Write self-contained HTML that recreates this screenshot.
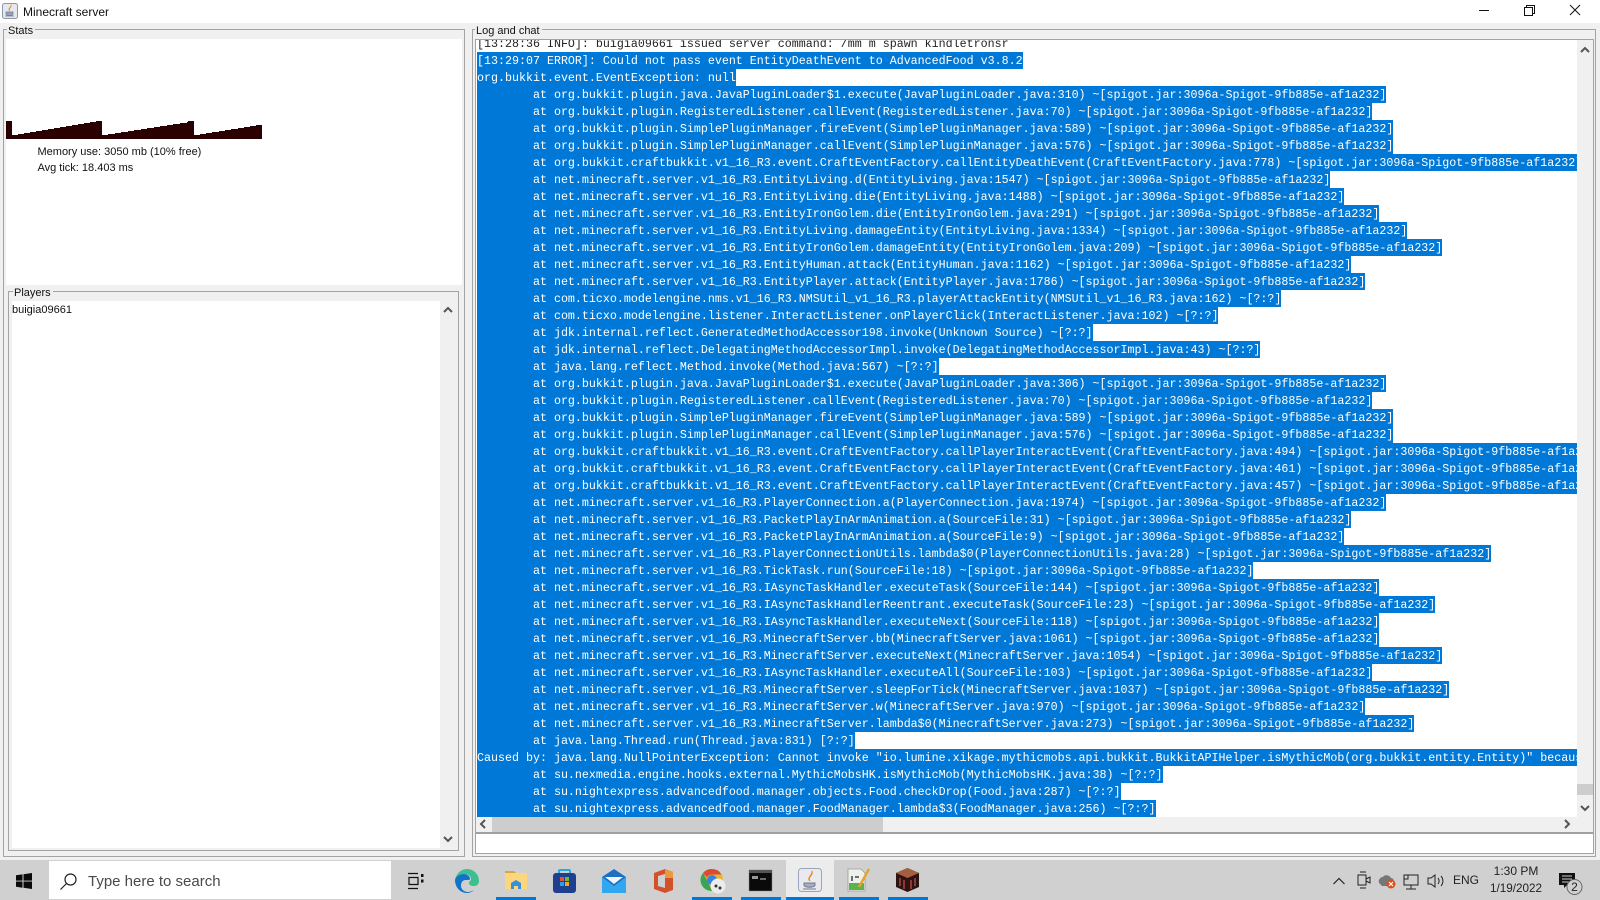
<!DOCTYPE html>
<html><head><meta charset="utf-8"><title>Minecraft server</title>
<style>
html,body{margin:0;padding:0;width:1600px;height:900px;overflow:hidden;background:#f0f0f0;font-family:"Liberation Sans",sans-serif;color:#111}
.a{position:absolute;box-sizing:border-box}
.b{border:1px solid #a3a3a3}
.lg{position:absolute;background:#f0f0f0;font-size:11px;line-height:14px;padding:0 2px 0 1px;color:#111;white-space:nowrap}
#log{left:476px;top:40px;width:1101px;height:777px;overflow:hidden;background:#fff}
#lines{position:absolute;left:1px;top:-5px;font-family:"Liberation Mono",monospace;font-size:11.667px;line-height:19px;color:#fff;white-space:pre}
#lines div{height:17px}
#lines span{display:block;width:fit-content;height:17px;background:#0078d7}
#lines div.n{color:#222}
svg{position:absolute;overflow:visible}
.ul{position:absolute;top:897px;height:3px;background:#0078d7}
.tr{position:absolute;font-size:12px;line-height:14px;text-align:center;color:#222;white-space:nowrap}
</style></head><body>
<!-- title bar -->
<div class="a" style="left:0;top:0;width:1600px;height:23px;background:#fff"></div>
<svg style="left:2px;top:3px" width="16" height="16" viewBox="0 0 16 16"><rect x=".5" y=".5" width="15" height="15" rx="2" fill="#e6e8ee" stroke="#8f97ad"/><path d="M9 1.500c1.500 2.500-3 4-1.500 6.500-2.500-2.500 2.500-4 1.500-6.500z" fill="#e8861c" stroke="#e8861c" stroke-width=".6"/><path d="M4 9h7v2c0 2-7 2-7 0zM3 13h9" fill="#9aa3b5" stroke="#6e7a90" stroke-width=".7"/></svg>
<div class="a" style="left:23px;top:5px;font-size:12px;line-height:14px;color:#111">Minecraft server</div>
<svg style="left:1479px;top:5px" width="110" height="12" viewBox="0 0 110 12" fill="none" stroke="#111" stroke-width="1"><path d="M0 5.500h10"/><path d="M45.500 2.500h8v8h-8zM47.500 2.500v-2h8v8h-2"/><path d="M91 0l10 10M101 0l-10 10"/></svg>

<!-- Stats panel -->
<div class="a b" style="left:3px;top:29px;width:462px;height:828px"></div>
<div class="a" style="left:6px;top:39px;width:456px;height:246px;background:#fff"></div>
<div class="lg" style="left:7px;top:24px">Stats</div>
<svg style="left:0;top:0" width="270" height="145" viewBox="0 0 270 145" shape-rendering="crispEdges"><path fill="#2a0000" d="M6 139V121H12V135H18V134H24V133H30V132H36V131H42V130H48V129H54V128H60V127H66V126H72V125H78V124H84V123H90V122H96V121H102V135H108V134H115V133H121V132H128V131H134V130H141V129H147V128H154V127H160V126H167V125H173V124H180V123H187V122H188V121H194V135H200V134H206V133H212V132H219V131H225V130H231V129H238V128H244V127H250V126H256V125H262V139Z"/></svg>
<div class="a" style="left:37.500px;top:145px;font-size:11px;line-height:14px;white-space:nowrap;color:#111">Memory use: 3050 mb (10% free)</div>
<div class="a" style="left:37.500px;top:161px;font-size:11px;line-height:14px;white-space:nowrap;color:#111">Avg tick: 18.403 ms</div>

<!-- Players -->
<div class="a b" style="left:8px;top:291px;width:451px;height:560px"></div>
<div class="lg" style="left:13px;top:286px">Players</div>
<div class="a" style="left:12px;top:301px;width:428px;height:547px;background:#fff"></div>
<div class="a" style="left:12px;top:303px;font-size:11px;line-height:14px;color:#111">buigia09661</div>
<svg style="left:440px;top:301px" width="16" height="547" viewBox="0 0 16 547" fill="none" stroke="#555" stroke-width="2"><path d="M4 11l4-4 4 4M4 536l4 4 4-4"/></svg>

<!-- Log panel -->
<div class="a b" style="left:472px;top:29px;width:1124px;height:828px"></div>
<div class="lg" style="left:475px;top:24px">Log and chat</div>
<div class="a b" style="left:475px;top:39px;width:1119px;height:795px;border-bottom:2px solid #a0a0a0"></div>
<div class="a" id="log"><div id="lines"><div class="n">[13:28:36 INFO]: buigia09661 issued server command: /mm m spawn kindletronsr</div><div><span>[13:29:07 ERROR]: Could not pass event EntityDeathEvent to AdvancedFood v3.8.2</span></div><div><span>org.bukkit.event.EventException: null</span></div><div><span>        at org.bukkit.plugin.java.JavaPluginLoader$1.execute(JavaPluginLoader.java:310) ~[spigot.jar:3096a-Spigot-9fb885e-af1a232]</span></div><div><span>        at org.bukkit.plugin.RegisteredListener.callEvent(RegisteredListener.java:70) ~[spigot.jar:3096a-Spigot-9fb885e-af1a232]</span></div><div><span>        at org.bukkit.plugin.SimplePluginManager.fireEvent(SimplePluginManager.java:589) ~[spigot.jar:3096a-Spigot-9fb885e-af1a232]</span></div><div><span>        at org.bukkit.plugin.SimplePluginManager.callEvent(SimplePluginManager.java:576) ~[spigot.jar:3096a-Spigot-9fb885e-af1a232]</span></div><div><span>        at org.bukkit.craftbukkit.v1_16_R3.event.CraftEventFactory.callEntityDeathEvent(CraftEventFactory.java:778) ~[spigot.jar:3096a-Spigot-9fb885e-af1a232]</span></div><div><span>        at net.minecraft.server.v1_16_R3.EntityLiving.d(EntityLiving.java:1547) ~[spigot.jar:3096a-Spigot-9fb885e-af1a232]</span></div><div><span>        at net.minecraft.server.v1_16_R3.EntityLiving.die(EntityLiving.java:1488) ~[spigot.jar:3096a-Spigot-9fb885e-af1a232]</span></div><div><span>        at net.minecraft.server.v1_16_R3.EntityIronGolem.die(EntityIronGolem.java:291) ~[spigot.jar:3096a-Spigot-9fb885e-af1a232]</span></div><div><span>        at net.minecraft.server.v1_16_R3.EntityLiving.damageEntity(EntityLiving.java:1334) ~[spigot.jar:3096a-Spigot-9fb885e-af1a232]</span></div><div><span>        at net.minecraft.server.v1_16_R3.EntityIronGolem.damageEntity(EntityIronGolem.java:209) ~[spigot.jar:3096a-Spigot-9fb885e-af1a232]</span></div><div><span>        at net.minecraft.server.v1_16_R3.EntityHuman.attack(EntityHuman.java:1162) ~[spigot.jar:3096a-Spigot-9fb885e-af1a232]</span></div><div><span>        at net.minecraft.server.v1_16_R3.EntityPlayer.attack(EntityPlayer.java:1786) ~[spigot.jar:3096a-Spigot-9fb885e-af1a232]</span></div><div><span>        at com.ticxo.modelengine.nms.v1_16_R3.NMSUtil_v1_16_R3.playerAttackEntity(NMSUtil_v1_16_R3.java:162) ~[?:?]</span></div><div><span>        at com.ticxo.modelengine.listener.InteractListener.onPlayerClick(InteractListener.java:102) ~[?:?]</span></div><div><span>        at jdk.internal.reflect.GeneratedMethodAccessor198.invoke(Unknown Source) ~[?:?]</span></div><div><span>        at jdk.internal.reflect.DelegatingMethodAccessorImpl.invoke(DelegatingMethodAccessorImpl.java:43) ~[?:?]</span></div><div><span>        at java.lang.reflect.Method.invoke(Method.java:567) ~[?:?]</span></div><div><span>        at org.bukkit.plugin.java.JavaPluginLoader$1.execute(JavaPluginLoader.java:306) ~[spigot.jar:3096a-Spigot-9fb885e-af1a232]</span></div><div><span>        at org.bukkit.plugin.RegisteredListener.callEvent(RegisteredListener.java:70) ~[spigot.jar:3096a-Spigot-9fb885e-af1a232]</span></div><div><span>        at org.bukkit.plugin.SimplePluginManager.fireEvent(SimplePluginManager.java:589) ~[spigot.jar:3096a-Spigot-9fb885e-af1a232]</span></div><div><span>        at org.bukkit.plugin.SimplePluginManager.callEvent(SimplePluginManager.java:576) ~[spigot.jar:3096a-Spigot-9fb885e-af1a232]</span></div><div><span>        at org.bukkit.craftbukkit.v1_16_R3.event.CraftEventFactory.callPlayerInteractEvent(CraftEventFactory.java:494) ~[spigot.jar:3096a-Spigot-9fb885e-af1a232]</span></div><div><span>        at org.bukkit.craftbukkit.v1_16_R3.event.CraftEventFactory.callPlayerInteractEvent(CraftEventFactory.java:461) ~[spigot.jar:3096a-Spigot-9fb885e-af1a232]</span></div><div><span>        at org.bukkit.craftbukkit.v1_16_R3.event.CraftEventFactory.callPlayerInteractEvent(CraftEventFactory.java:457) ~[spigot.jar:3096a-Spigot-9fb885e-af1a232]</span></div><div><span>        at net.minecraft.server.v1_16_R3.PlayerConnection.a(PlayerConnection.java:1974) ~[spigot.jar:3096a-Spigot-9fb885e-af1a232]</span></div><div><span>        at net.minecraft.server.v1_16_R3.PacketPlayInArmAnimation.a(SourceFile:31) ~[spigot.jar:3096a-Spigot-9fb885e-af1a232]</span></div><div><span>        at net.minecraft.server.v1_16_R3.PacketPlayInArmAnimation.a(SourceFile:9) ~[spigot.jar:3096a-Spigot-9fb885e-af1a232]</span></div><div><span>        at net.minecraft.server.v1_16_R3.PlayerConnectionUtils.lambda$0(PlayerConnectionUtils.java:28) ~[spigot.jar:3096a-Spigot-9fb885e-af1a232]</span></div><div><span>        at net.minecraft.server.v1_16_R3.TickTask.run(SourceFile:18) ~[spigot.jar:3096a-Spigot-9fb885e-af1a232]</span></div><div><span>        at net.minecraft.server.v1_16_R3.IAsyncTaskHandler.executeTask(SourceFile:144) ~[spigot.jar:3096a-Spigot-9fb885e-af1a232]</span></div><div><span>        at net.minecraft.server.v1_16_R3.IAsyncTaskHandlerReentrant.executeTask(SourceFile:23) ~[spigot.jar:3096a-Spigot-9fb885e-af1a232]</span></div><div><span>        at net.minecraft.server.v1_16_R3.IAsyncTaskHandler.executeNext(SourceFile:118) ~[spigot.jar:3096a-Spigot-9fb885e-af1a232]</span></div><div><span>        at net.minecraft.server.v1_16_R3.MinecraftServer.bb(MinecraftServer.java:1061) ~[spigot.jar:3096a-Spigot-9fb885e-af1a232]</span></div><div><span>        at net.minecraft.server.v1_16_R3.MinecraftServer.executeNext(MinecraftServer.java:1054) ~[spigot.jar:3096a-Spigot-9fb885e-af1a232]</span></div><div><span>        at net.minecraft.server.v1_16_R3.IAsyncTaskHandler.executeAll(SourceFile:103) ~[spigot.jar:3096a-Spigot-9fb885e-af1a232]</span></div><div><span>        at net.minecraft.server.v1_16_R3.MinecraftServer.sleepForTick(MinecraftServer.java:1037) ~[spigot.jar:3096a-Spigot-9fb885e-af1a232]</span></div><div><span>        at net.minecraft.server.v1_16_R3.MinecraftServer.w(MinecraftServer.java:970) ~[spigot.jar:3096a-Spigot-9fb885e-af1a232]</span></div><div><span>        at net.minecraft.server.v1_16_R3.MinecraftServer.lambda$0(MinecraftServer.java:273) ~[spigot.jar:3096a-Spigot-9fb885e-af1a232]</span></div><div><span>        at java.lang.Thread.run(Thread.java:831) [?:?]</span></div><div><span>Caused by: java.lang.NullPointerException: Cannot invoke "io.lumine.xikage.mythicmobs.api.bukkit.BukkitAPIHelper.isMythicMob(org.bukkit.entity.Entity)" because</span></div><div><span>        at su.nexmedia.engine.hooks.external.MythicMobsHK.isMythicMob(MythicMobsHK.java:38) ~[?:?]</span></div><div><span>        at su.nightexpress.advancedfood.manager.objects.Food.checkDrop(Food.java:287) ~[?:?]</span></div><div><span>        at su.nightexpress.advancedfood.manager.FoodManager.lambda$3(FoodManager.java:256) ~[?:?]</span></div></div></div>
<!-- log scrollbars -->
<div class="a" style="left:1577px;top:40px;width:16px;height:777px;background:#f0f0f0"></div>
<div class="a" style="left:1577px;top:784px;width:16px;height:11px;background:#cdcdcd"></div>
<div class="a" style="left:476px;top:817px;width:1117px;height:15px;background:#f0f0f0"></div>
<div class="a" style="left:492px;top:817px;width:391px;height:15px;background:#cdcdcd"></div>
<svg style="left:0;top:0" width="1600" height="840" viewBox="0 0 1600 840" fill="none" stroke="#555" stroke-width="2"><path d="M1581 52l4-4 4 4M1581 806l4 4 4-4M485 820l-4 4 4 4M1565 820l4 4-4 4"/></svg>
<!-- input -->
<div class="a b" style="left:475px;top:834px;width:1119px;height:20px;background:#fff;border-top:0"></div>

<!-- Taskbar -->
<div class="a" style="left:0;top:860px;width:1600px;height:40px;background:#d0d0d0"></div>
<svg style="left:16px;top:873px" width="16" height="16" viewBox="0 0 16 16" fill="#0a0a0a"><path d="M0 2.300l6.500-.9v6.200H0zM7.500 1.300L16 0v7.600H7.500zM0 8.500h6.500v6.200L0 13.700zM7.500 8.500H16V16l-8.500-1.200z"/></svg>
<div class="a" style="left:49px;top:861px;width:342px;height:38px;background:#fff"></div>
<svg style="left:60px;top:873px" width="17" height="17" viewBox="0 0 17 17" fill="none" stroke="#222" stroke-width="1.200"><circle cx="10.500" cy="6.500" r="5.500"/><path d="M6.500 10.500L.5 16.500"/></svg>
<div class="a" style="left:88px;top:873px;font-size:15px;line-height:18px;color:#4a4a4a;white-space:nowrap">Type here to search</div>
<svg style="left:408px;top:873px" width="16" height="16" viewBox="0 0 16 16" fill="none" stroke="#111" stroke-width="1.200"><path d="M0 .5h10M0 15.500h10M1 4.500h9v7H1z"/><path d="M13 1h2.500v3H13zM13 6.500h2.500v3H13z" fill="#111" stroke="none"/></svg>
<!-- edge -->
<svg style="left:455px;top:869px" width="24" height="24" viewBox="0 0 24 24"><path d="M12 0a12 12 0 0 1 12 12c0 3-2 5-5 5-3 0-5-1-5-3 0-2 2-2 2-4 0-3-3-5-6-5C5 5 1 8 0 11 1 5 6 0 12 0z" fill="#3cc08f"/><path d="M0 11c1-4 5-6 9-6 3 0 6 2 6 5 0 1-2 1-4 1-4 0-5 3-5 6 0 3 3 6 7 6 2 0 4-1 6-2-2 2-5 3-7 3C5 24 0 18 0 11z" fill="#1273c9"/></svg>
<!-- folder -->
<svg style="left:505px;top:871px" width="22" height="20" viewBox="0 0 22 20"><path d="M0 0h9l2 2h-11z" fill="#dca53b"/><path d="M0 2h22v16H0z" fill="#fbd67c"/><path d="M6 12l5-3 5 3v6H13v-3H9v3H6z" fill="#3b8fd8"/></svg>
<!-- store -->
<svg style="left:553px;top:869px" width="23" height="24" viewBox="0 0 23 24"><path d="M6 5V2a1 1 0 0 1 1-1h9a1 1 0 0 1 1 1v3" fill="none" stroke="#2ba7e4" stroke-width="2"/><rect y="4" width="23" height="20" rx="3" fill="#1f3f8f"/><path d="M7 8h4v4H7z" fill="#e5532a"/><path d="M12 8h4v4h-4z" fill="#74b53b"/><path d="M7 13h4v4H7z" fill="#23a5ea"/><path d="M12 13h4v4h-4z" fill="#f2a71b"/></svg>
<!-- mail -->
<svg style="left:602px;top:869px" width="24" height="24" viewBox="0 0 24 24"><path d="M12 0l12 8v16H0V8z" fill="#1d6fc4"/><path d="M3 8h18l-9 7z" fill="#eef4fb"/><path d="M0 8l12 9 12-9v16H0z" fill="#31a7ef"/></svg>
<!-- office -->
<svg style="left:654px;top:869px" width="19" height="24" viewBox="0 0 19 24"><path d="M0 4l11-4 8 3v18l-8 3-11-4z" fill="#d3512a"/><path d="M11 0l8 3v6h-8z" fill="#e89a3c"/><path d="M4 7l7-2v14l-7-2z" fill="#d0d0d0"/></svg>
<!-- chrome -->
<svg style="left:701px;top:868px" width="26" height="26" viewBox="0 0 26 26"><circle cx="11" cy="12" r="11" fill="#e8b52e"/><path d="M11 1a11 11 0 0 1 9.500 5.500H11a5.500 5.500 0 0 0-5 3L2 5A11 11 0 0 1 11 1z" fill="#db4a37"/><path d="M2 5l5 9 4 9A11 11 0 0 1 2 5z" fill="#3aa655"/><circle cx="11" cy="12" r="5" fill="#3b82e0"/><circle cx="17" cy="18" r="7.500" fill="#ececec"/><circle cx="15" cy="18" r="1.500" fill="#333"/><circle cx="19" cy="20" r="1.500" fill="#333"/></svg>
<!-- cmd -->
<svg style="left:749px;top:870px" width="23" height="21" viewBox="0 0 23 21"><rect width="23" height="21" fill="#0a0a0a" stroke="#888" stroke-width=".5"/><rect width="23" height="3" fill="#555"/><path d="M3 6h6v3H3z" fill="#999"/><path d="M11 9h6" stroke="#ccc"/></svg>
<!-- java active -->
<div class="a" style="left:786px;top:860px;width:48px;height:40px;background:#ececec"></div>
<svg style="left:798px;top:868px" width="24" height="24" viewBox="0 0 24 24"><rect x=".5" y=".5" width="23" height="23" rx="3" fill="#e8eaf0" stroke="#9aa4bc"/><path d="M14 3c2 4-5 6-2 10-4-3 3-6 2-10z" fill="#e8861c" stroke="#e8861c"/><path d="M6 15h11v2c0 3-11 3-11 0zM5 21h13" fill="#a5adbd" stroke="#6e7a90"/></svg>
<!-- notes -->
<svg style="left:847px;top:868px" width="24" height="24" viewBox="0 0 24 24"><path d="M1 1h13l4 4v18H1z" fill="#eef0ec" stroke="#9a9a9a" stroke-width=".8"/><path d="M2 15h15v7H2z" fill="#5cb34a"/><path d="M5 8v5M8 9h4" stroke="#444" stroke-width="1.500"/><path d="M22 1L12 19" stroke="#e8a32a" stroke-width="2.500"/></svg>
<!-- minecraft -->
<svg style="left:896px;top:868px" width="23" height="24" viewBox="0 0 23 24"><path d="M11.500 0L23 5v14l-11.500 5L0 19V5z" fill="#2d1414"/><path d="M11.500 0L23 5l-11.500 5L0 5z" fill="#a4603e"/><path d="M4 10v8M8 12v9M15 12v9M19 10v8" stroke="#8a3a30" stroke-width="2"/></svg>
<div class="ul" style="left:496px;width:40px"></div>
<div class="ul" style="left:692px;width:40px"></div>
<div class="ul" style="left:741px;width:40px"></div>
<div class="ul" style="left:786px;width:48px"></div>
<div class="ul" style="left:839px;width:40px"></div>
<div class="ul" style="left:888px;width:40px"></div>
<!-- tray -->
<svg style="left:0;top:0" width="1600" height="900" viewBox="0 0 1600 900" fill="none" stroke="#222" stroke-width="1.200">
<path d="M1333.500 884l5.500-5.500 5.500 5.500"/>
<path d="M1358 875h8v10h-8zM1366 879l4-2v6l-4-2" stroke-width="1"/>
<path d="M1360 872h6M1360 888h6" stroke-width="1"/>
<path d="M1380 884c-3-3 0-7 3-7 1-3 7-2 8 1 2 0 3 2 3 4l-2 4h-10z" fill="#777" stroke="none"/>
<circle cx="1391" cy="884" r="4.500" fill="#d8501f" stroke="none"/>
<path d="M1389 882l4 4M1393 882l-4 4" stroke="#fff"/>
<path d="M1404 875h14v10h-14zM1411 885v4M1406 889h10M1404 875h4v4h-4z" stroke-width="1"/>
<path d="M1428 878h3l4-3v12l-4-3h-3zM1438 878c1.500 2 1.500 4 0 6M1441 876c2.500 3 2.500 7 0 10" stroke-width="1"/>
<path d="M1559 873h16v12h-8l-3 3v-3h-5z" fill="#111" stroke="none"/>
<path d="M1562 876h10M1562 879h10M1562 882h7" stroke="#d0d0d0" stroke-width="1"/>
<circle cx="1574.500" cy="887" r="7.500" fill="#d0d0d0" stroke="#666" stroke-width="1"/>
</svg>
<div class="tr" style="left:1453px;top:873px;width:24px;font-size:12px">ENG</div>
<div class="tr" style="left:1486px;top:864px;width:60px">1:30 PM</div>
<div class="tr" style="left:1486px;top:882px;width:60px;font-size:11.700px">1/19/2022</div>
<div class="tr" style="left:1569px;top:880px;width:11px;font-size:12px">2</div>
</body></html>
